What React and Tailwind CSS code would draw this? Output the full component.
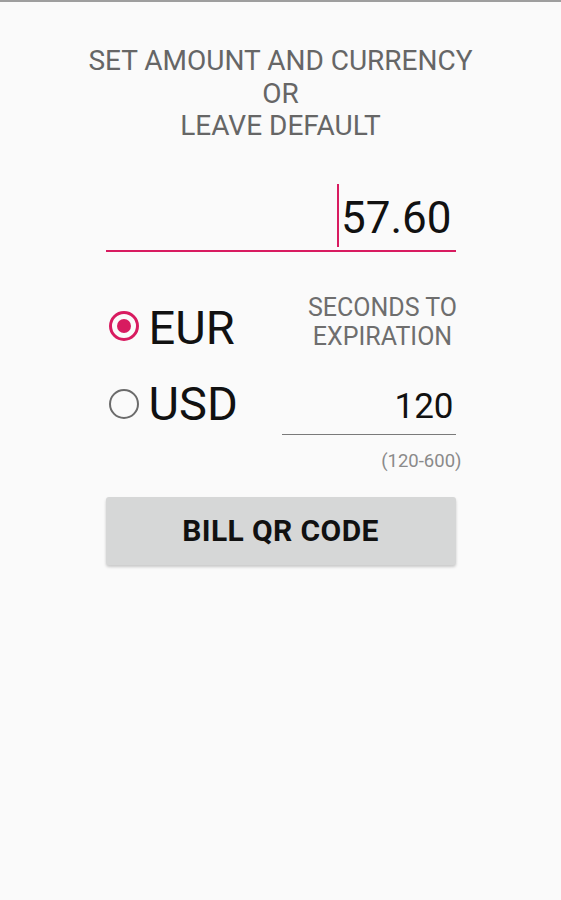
import React from 'react'

const Radio = ({ checked }) => (
  <span
    className={
      checked
        ? 'flex items-center justify-center w-[30px] h-[30px] rounded-full border-[3px] border-[#d81b60] mb-[4px]'
        : 'flex items-center justify-center w-[30px] h-[30px] rounded-full border-[2.5px] border-[#6b6b6b]'
    }
  >
    {checked && <span className="w-[14px] h-[14px] rounded-full bg-[#d81b60]" />}
  </span>
)

const App = () => {
  return (
    <div className="min-h-[900px] bg-[#fafafa] font-['Roboto',sans-serif]">
      <div className="h-[2px] bg-[#9e9e9e]" />

      <div className="w-[350px] mx-auto pt-[43px]">
        {/* Heading */}
        <h1 className="flex flex-col items-center text-[28px] leading-[32.5px] text-[#666666] whitespace-nowrap">
          <span>SET AMOUNT AND CURRENCY</span>
          <span>OR</span>
          <span>LEAVE DEFAULT</span>
        </h1>

        {/* Amount input */}
        <div className="mt-[49px] border-b-2 border-[#d81b60] pb-[6px]">
          <div className="flex justify-end text-[44px] leading-[52px] text-[#111111] pr-[4px]">
            <span className="relative">
              <span className="absolute left-[-4px] top-[-8px] w-[2px] h-[63px] bg-[#d81b60]" />
              57.60
            </span>
          </div>
        </div>

        {/* Currency + expiration */}
        <div className="grid grid-cols-[176px_174px] mt-[38px]">
          <div className="flex flex-col">
            <label className="flex items-center h-[76px] pl-[3px] gap-[10px]">
              <Radio checked />
              <span className="text-[47px] leading-[76px] text-[#111111]">EUR</span>
            </label>
            <label className="flex items-center h-[76px] pl-[3px] gap-[10px]">
              <Radio />
              <span className="text-[47px] leading-[76px] text-[#111111]">USD</span>
            </label>
          </div>

          <div className="flex flex-col">
            <div className="pt-[3px] pl-[28px] flex flex-col items-center text-[25px] leading-[29.5px] text-[#6e6e6e] whitespace-nowrap">
              <span>SECONDS TO</span>
              <span>EXPIRATION</span>
            </div>
            <div className="mt-[35px] border-b border-[#7a7a7a] pb-[7px]">
              <div className="text-right text-[35px] leading-[40px] text-[#111111] pr-[2px]">120</div>
            </div>
            <p className="mt-[15px] -mr-[6px] text-right text-[18.5px] leading-[22px] text-[#8a8a8a]">(120-600)</p>
          </div>
        </div>

        {/* Action */}
        <button className="mt-[25px] w-full h-[68px] rounded-[3px] bg-[#d6d7d7] shadow-[0_2px_3px_rgba(0,0,0,0.2)] text-[30px] font-bold text-[#111111] tracking-[0.4px]">
          BILL QR CODE
        </button>
      </div>
    </div>
  )
}

export default App
